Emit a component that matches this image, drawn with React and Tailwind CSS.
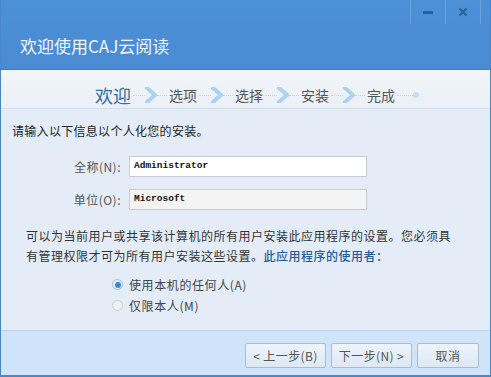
import React from 'react';

const cjk = { fontFamily: '"Noto Sans CJK SC", "Noto Sans", sans-serif' };

function Chevron() {
  return (
    <svg width="12" height="16" viewBox="0 0 12 16" className="shrink-0">
      <path d="M2 1 L10 8 L2 15" fill="none" stroke="#a9d3f1" strokeWidth="4" strokeLinejoin="round" strokeLinecap="round" />
    </svg>
  );
}

function Connector() {
  return (
    <div className="flex items-center w-[38px] shrink-0">
      <div className="w-[12px] ml-[2px] border-t border-dotted border-[#c3d3e3]" />
      <Chevron />
      <div className="flex-1 mr-[2px] border-t border-dotted border-[#c3d3e3]" />
    </div>
  );
}

function Step({ label, active }) {
  return (
    <span
      className={active ? 'text-[18px] text-[#2f6fa6] leading-none' : 'text-[14px] text-[#555] leading-none'}
    >
      {label}
    </span>
  );
}

function Radio({ checked, label }) {
  return (
    <div className="flex items-center h-[21px]">
      <span
        className={`w-[11px] h-[11px] rounded-full border flex items-center justify-center ${
          checked ? 'border-[#9cbfe0] bg-[#e8f2fb]' : 'border-[#c9d0d7] bg-[#eef0f2]'
        }`}
      >
        {checked && <span className="w-[6px] h-[6px] rounded-full bg-[#3d86d4]" />}
      </span>
      <span className="ml-[6px] text-[12px] text-[#444] tracking-[0.6px]">{label}</span>
    </div>
  );
}

function Button({ children, w }) {
  return (
    <button
      className={`${w} h-[25px] rounded-[2px] border border-[#a8bcd2] bg-gradient-to-b from-[#eef4fa] to-[#dce8f4] text-[12px] text-[#555] flex items-center justify-center tracking-[0.4px]`}
    >
      {children}
    </button>
  );
}

export default function App() {
  return (
    <div className="w-[491px] h-[377px] flex flex-col bg-[#e4edf7] border-x border-b-2 border-[#4a86c5] overflow-hidden" style={cjk}>
      {/* Title bar */}
      <div className="h-[70px] shrink-0 bg-gradient-to-b from-[#4c90d8] to-[#4a8bd3] border-b border-[#3e7ec3] flex flex-col">
        <div className="flex justify-end pr-[9px]">
          <div className="w-[36px] h-[24px] border-x border-[#6aa3de] flex items-center justify-center">
            <span className="w-[10px] h-[3px] bg-[#2c5f95]" />
          </div>
          <div className="w-[35px] h-[24px] border-r border-[#6aa3de] flex items-center justify-center">
            <svg width="10" height="10" viewBox="0 0 10 10">
              <path d="M1.5 1.5 L8.5 8.5 M8.5 1.5 L1.5 8.5" stroke="#2c5f95" strokeWidth="2" />
            </svg>
          </div>
        </div>
        <div className="pl-[19px] pt-[13px] text-[17px] leading-none text-[#eef5fd]">欢迎使用CAJ云阅读</div>
      </div>

      {/* Steps */}
      <div className="h-[39px] shrink-0 bg-gradient-to-b from-[#f1f5f9] to-[#eaf0f6] border-b border-[#d2deea] flex items-center pl-[94px] pt-[12px]">
        <Step label="欢迎" active />
        <Connector />
        <Step label="选项" />
        <Connector />
        <Step label="选择" />
        <Connector />
        <Step label="安装" />
        <Connector />
        <Step label="完成" />
        <div className="w-[16px] ml-[2px] border-t border-dotted border-[#c3d3e3]" />
        <span className="w-[6px] h-[6px] rounded-full bg-[#bfe0f5]" />
      </div>

      {/* Body */}
      <div className="flex-1 flex flex-col pl-[11px] pt-[15px]">
        <div className="text-[12px] text-[#222] tracking-[0.3px] leading-[14px]">请输入以下信息以个人化您的安装。</div>

        <div className="flex flex-col gap-[12px] mt-[18px]">
          <div className="flex items-center">
            <span className="w-[117px] text-right pr-[8px] text-[12px] text-[#555] tracking-[0.5px]">全称(N):</span>
            <div className="w-[238px] h-[21px] border border-[#c4ccd5] bg-white flex items-center pl-[4px] text-[9.5px] font-bold text-[#111]" style={{ fontFamily: '"Liberation Mono", monospace' }}>
              Administrator
            </div>
          </div>
          <div className="flex items-center">
            <span className="w-[117px] text-right pr-[8px] text-[12px] text-[#555] tracking-[0.5px]">单位(O):</span>
            <div className="w-[238px] h-[21px] border border-[#c4ccd5] bg-[#f4f4f4] flex items-center pl-[4px] text-[9.5px] font-bold text-[#111]" style={{ fontFamily: '"Liberation Mono", monospace' }}>
              Microsoft
            </div>
          </div>
        </div>

        <p className="mt-[16px] ml-[14px] text-[12px] leading-[20px] text-[#333] tracking-[0.5px]">
          可以为当前用户或共享该计算机的所有用户安装此应用程序的设置。您必须具
          <br />
          有管理权限才可为所有用户安装这些设置。<span className="text-[#1d5c9f] font-medium">此应用程序的使用者：</span>
        </p>

        <div className="flex flex-col mt-[8px] ml-[100px]">
          <Radio checked label="使用本机的任何人(A)" />
          <Radio label="仅限本人(M)" />
        </div>
      </div>

      {/* Footer */}
      <div className="h-[45px] shrink-0 bg-[#cfe4f8] border-t border-[#bed3e8] flex items-start justify-end gap-[5px] pr-[11px] pt-[12px]">
        <Button w="w-[81px]">&lt; 上一步(B)</Button>
        <Button w="w-[81px]">下一步(N) &gt;</Button>
        <Button w="w-[62px]">取消</Button>
      </div>
    </div>
  );
}
